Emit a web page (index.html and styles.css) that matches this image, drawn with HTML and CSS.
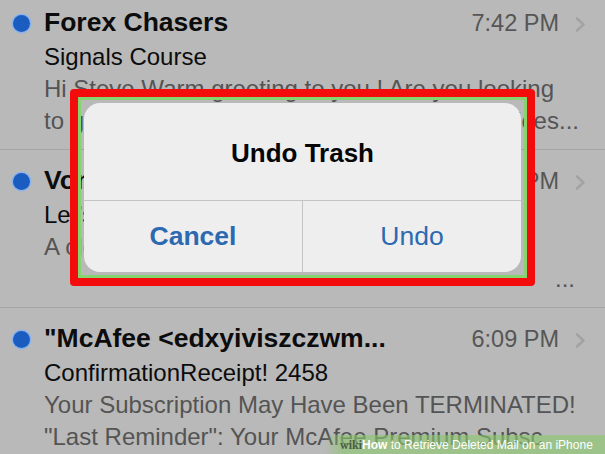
FILE: index.html
```html
<!DOCTYPE html>
<html>
<head>
    <title>Undo Trash</title>
    <link rel="stylesheet" href="styles.css">
</head>
<body>
    <div class="list">
        <div class="mail">
            <span class="dot"></span>
            <div class="mail-body">
                <div class="mail-head">
                    <span class="sender">Forex Chasers</span>
                    <span class="time">7:42 PM</span>
                    <svg class="chevron" width="11" height="15" viewBox="0 0 11 15"><polyline points="2,1.5 8.5,7.5 2,13.5" /></svg>
                </div>
                <div class="subject">Signals Course</div>
                <div class="preview">Hi Steve Warm greeting to you ! Are you looking to get the best forex signals and trading services...</div>
            </div>
        </div>
        <div class="mail">
            <span class="dot"></span>
            <div class="mail-body">
                <div class="mail-head">
                    <span class="sender">Vonage Business</span>
                    <span class="time">6:51 PM</span>
                    <svg class="chevron" width="11" height="15" viewBox="0 0 11 15"><polyline points="2,1.5 8.5,7.5 2,13.5" /></svg>
                </div>
                <div class="subject">Let&rsquo;s get you set up</div>
                <div class="preview-line">A closer look at your new account</div>
                <div class="preview-line preview-more">...</div>
            </div>
        </div>
        <div class="mail">
            <span class="dot"></span>
            <div class="mail-body">
                <div class="mail-head">
                    <span class="sender">"McAfee &lt;edxyiviszczwm...</span>
                    <span class="time">6:09 PM</span>
                    <svg class="chevron" width="11" height="15" viewBox="0 0 11 15"><polyline points="2,1.5 8.5,7.5 2,13.5" /></svg>
                </div>
                <div class="subject">ConfirmationReceipt! 2458</div>
                <div class="preview-line">Your Subscription May Have Been TERMINATED!</div>
                <div class="preview-line">"Last Reminder": Your McAfee Premium Subsc</div>
            </div>
        </div>
    </div>

    <!-- highlight box drawn around the alert -->
    <div class="frame">
        <div class="alert">
            <div class="alert-title">Undo Trash</div>
            <div class="alert-buttons">
                <button class="btn btn-cancel">Cancel</button>
                <button class="btn">Undo</button>
            </div>
        </div>
    </div>

    <div class="watermark"><span class="wiki">wiki</span><b>How</b> to Retrieve Deleted Mail on an iPhone</div>
</body>
</html>
```

FILE: styles.css
```css
body {
  margin: 0;
  padding: 0;
  width: 605px;
  height: 454px;
  overflow: hidden;
  position: relative;
  background-color: #b9b9b9;
  font-family: "Liberation Sans", Arial, sans-serif;
  color: #0c0c0c;
}

.list {
  height: 462px;
  margin-top: -8px;
  overflow: hidden;
}

.mail {
  display: grid;
  grid-template-columns: 44px 1fr;
  padding: 12px 0 12px 0;
  border-bottom: 1px solid #a5a5a5;
}

.dot {
  width: 17px;
  height: 17px;
  margin: 11px 0 0 13px;
  border-radius: 50%;
  background-color: #1a5cc0;
  box-shadow: 0 0 0 1.5px #8fb3e8;
}

.mail-body {
  min-width: 0;
  padding-right: 19px;
}

.mail-head {
  display: flex;
  align-items: baseline;
  height: 37px;
  line-height: 37px;
}

.sender {
  flex: 1;
  font-size: 26.5px;
  font-weight: bold;
  white-space: nowrap;
  overflow: hidden;
}

.time {
  font-size: 23.5px;
  color: #565656;
  margin-right: 16px;
}

.chevron {
  align-self: flex-start;
  margin-top: 13px;
  fill: none;
  stroke: #a3a3a3;
  stroke-width: 2.6;
  stroke-linecap: round;
  stroke-linejoin: round;
}

.subject {
  font-size: 24px;
  line-height: 32px;
  white-space: nowrap;
  overflow: hidden;
}

.preview {
  font-size: 24px;
  line-height: 32px;
  color: #545454;
  height: 64px;
  margin-right: 6px;
  overflow: hidden;
  display: -webkit-box;
  -webkit-line-clamp: 2;
  -webkit-box-orient: vertical;
}

.preview-line {
  font-size: 24px;
  line-height: 32px;
  color: #545454;
  white-space: nowrap;
  overflow: hidden;
}

.preview-more {
  text-align: right;
  padding-right: 11px;
}

.frame {
  position: absolute;
  left: 70px;
  top: 89px;
  width: 437px;
  padding: 6px;
  border: 8px solid #f40b0b;
  border-radius: 4px;
  box-shadow: inset 0 0 0 3px #86d46f;
}

.alert {
  background-color: #eeeeee;
  border-radius: 16px;
  overflow: hidden;
}

.alert-title {
  height: 97px;
  display: flex;
  align-items: center;
  justify-content: center;
  font-size: 26px;
  font-weight: bold;
  color: #050505;
  padding-top: 4px;
  box-sizing: border-box;
}

.alert-buttons {
  display: grid;
  grid-template-columns: 219px 1fr;
  height: 71px;
  border-top: 1px solid #c4c4c4;
}

.btn {
  border: none;
  background: none;
  font-family: inherit;
  font-size: 26.5px;
  color: #2c69b0;
  padding: 0;
}

.btn-cancel {
  font-weight: bold;
  border-right: 1px solid #c4c4c4;
}

.watermark {
  position: absolute;
  right: 0;
  bottom: 0;
  width: 265px;
  height: 19px;
  padding-left: 15px;
  background: linear-gradient(to right, rgba(140, 200, 110, 0), rgba(140, 200, 110, 0.6) 6%, rgba(140, 200, 110, 0.65));
  font-family: "Liberation Sans", Arial, sans-serif;
  font-size: 12px;
  line-height: 20px;
  color: #ffffff;
  white-space: nowrap;
}

.wiki {
  font-family: "Liberation Serif", serif;
  font-weight: bold;
  color: #4b5b42;
}
```
